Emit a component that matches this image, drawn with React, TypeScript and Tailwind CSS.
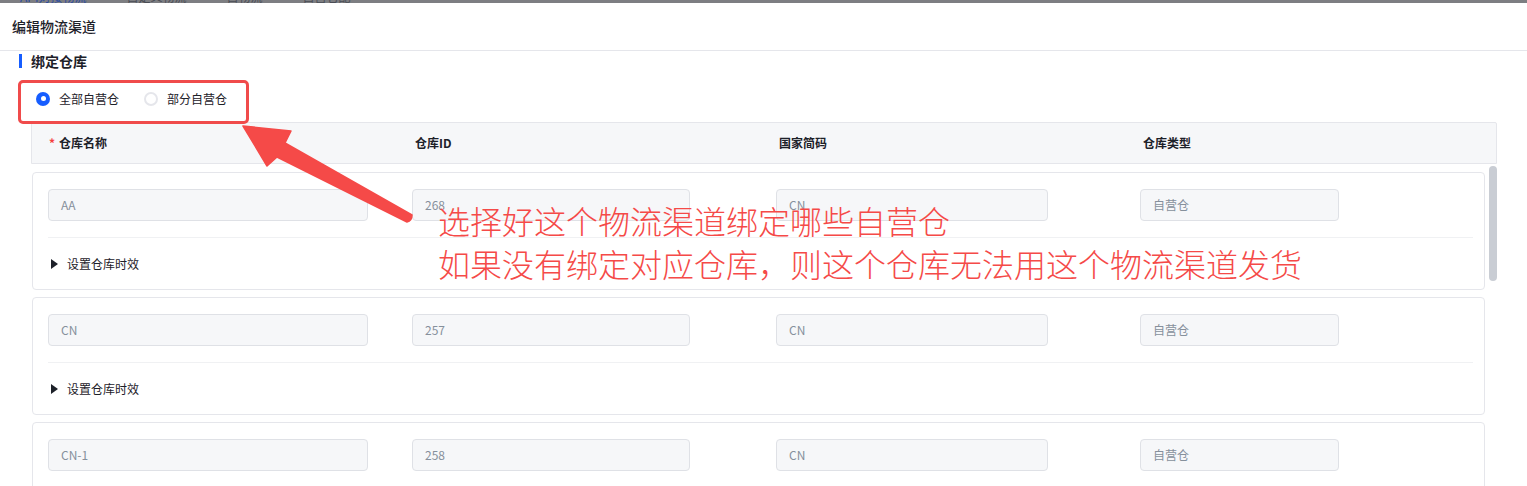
import React from 'react';

type Row = { name: string; id: string; country: string; type: string };

const rows: Row[] = [
  { name: 'AA', id: '268', country: 'CN', type: '自营仓' },
  { name: 'CN', id: '257', country: 'CN', type: '自营仓' },
  { name: 'CN-1', id: '258', country: 'CN', type: '自营仓' },
];

const font = 'font-["Noto_Sans_CJK_SC","Noto_Sans",sans-serif]';

const Field: React.FC<{ value: string; width: string }> = ({ value, width }) => (
  <div
    className={`${width} h-[32px] flex items-center px-[12px] bg-[#f6f7f9] border border-[#dfe1e6] rounded-[4px] text-[12px] text-[#86909c]`}
  >
    {value}
  </div>
);

const Radio: React.FC<{ checked?: boolean; label: string }> = ({ checked, label }) => (
  <label className="flex items-center gap-[9px] text-[12px] text-[#1d2129]">
    {checked ? (
      <span className="w-[14px] h-[14px] rounded-full bg-[#165dff] flex items-center justify-center">
        <span className="w-[5px] h-[5px] rounded-full bg-white" />
      </span>
    ) : (
      <span className="w-[14px] h-[14px] rounded-full border-2 border-[#e5e6eb] bg-white" />
    )}
    {label}
  </label>
);

const WarehouseCard: React.FC<{ row: Row }> = ({ row }) => (
  <div className="w-[1453px] h-[118px] border border-[#e5e6eb] rounded-[4px] bg-white pt-[16px] shrink-0">
    <div className="grid grid-cols-[364px_364px_364px_1fr] pl-[15px]">
      <Field value={row.name} width="w-[320px]" />
      <Field value={row.id} width="w-[278px]" />
      <Field value={row.country} width="w-[272px]" />
      <Field value={row.type} width="w-[199px]" />
    </div>
    <div className="ml-[15px] mr-[11px] mt-[16px] border-t border-[#f0f1f3]" />
    <div className="flex items-center h-[51px] pl-[18px] gap-[9px] text-[12px] text-[#1d2129]">
      <svg width="7" height="10" viewBox="0 0 7 10">
        <path d="M0 0 L7 5 L0 10 Z" fill="#1d2129" />
      </svg>
      设置仓库时效
    </div>
  </div>
);

export default function App() {
  return (
    <div className={`relative w-[1527px] h-[486px] overflow-hidden bg-white ${font}`}>
      {/* page behind the modal, dimmed */}
      <div className="h-[3px] overflow-hidden bg-[#7d7e82]">
        <div className="flex gap-[40px] pl-[20px] -mt-[12px] text-[12px] text-[#4a4d55]">
          <span className="text-[#2a4aa0]">API对接物流</span>
          <span>自定义物流</span>
          <span>自物流</span>
          <span>自营仓配</span>
        </div>
      </div>

      <div className="h-[48px] flex items-center px-[12px] border-b border-[#e5e6eb] text-[14px] font-medium text-[#1d2129]">
        编辑物流渠道
      </div>

      <div className="pl-[19px] pt-[3px]">
        <div className="flex items-center gap-[9px] h-[14px]">
          <span className="w-[3px] h-[14px] bg-[#165dff]" />
          <span className="text-[14px] font-bold text-[#1d2129]">绑定仓库</span>
        </div>

        <div className="flex items-center gap-[25px] pl-[17px] h-[47px] mt-[7px]">
          <Radio checked label="全部自营仓" />
          <Radio label="部分自营仓" />
        </div>

        <div className="ml-[12px] w-[1466px]">
          <div className="h-[42px] grid grid-cols-[364px_364px_364px_1fr] items-center pl-[17px] bg-[#f6f7f9] border border-[#e5e6eb] rounded-t-[2px] text-[12px] font-bold text-[#1d2129]">
            <span>
              <span className="text-[#f53f3f] mr-[4px]">*</span>仓库名称
            </span>
            <span className="ml-[2px]">仓库ID</span>
            <span className="ml-[2px]">国家简码</span>
            <span className="ml-[2px]">仓库类型</span>
          </div>
          <div className="flex">
            <div className="flex flex-col gap-[7px] pt-[8px] pl-[1px]">
              {rows.map((r) => (
                <WarehouseCard key={r.id} row={r} />
              ))}
            </div>
            <div className="ml-[4px] mt-[2px] w-[8px] h-[115px] rounded-full bg-[#c9cdd4]" />
          </div>
        </div>
      </div>

      {/* annotation overlay */}
      <div className="absolute left-[18px] top-[80px] w-[231px] h-[44px] border-[3px] border-[#f04b4b] rounded-[5px]" />
      <svg className="absolute left-0 top-0 pointer-events-none" width="1527" height="486">
        <path
          d="M243 126 L291 131 L285 143 L412 215 Q412 221 407 222 L277 157 L267 166 Z"
          fill="#f54a48"
          stroke="#f54a48"
          strokeWidth="1.5"
          strokeLinejoin="round"
        />
      </svg>
      <div className="absolute left-[438px] top-[199px] text-[32px] leading-[43px] font-light text-[#f54a48] whitespace-nowrap">
        <div>选择好这个物流渠道绑定哪些自营仓</div>
        <div>如果没有绑定对应仓库，则这个仓库无法用这个物流渠道发货</div>
      </div>
    </div>
  );
}
